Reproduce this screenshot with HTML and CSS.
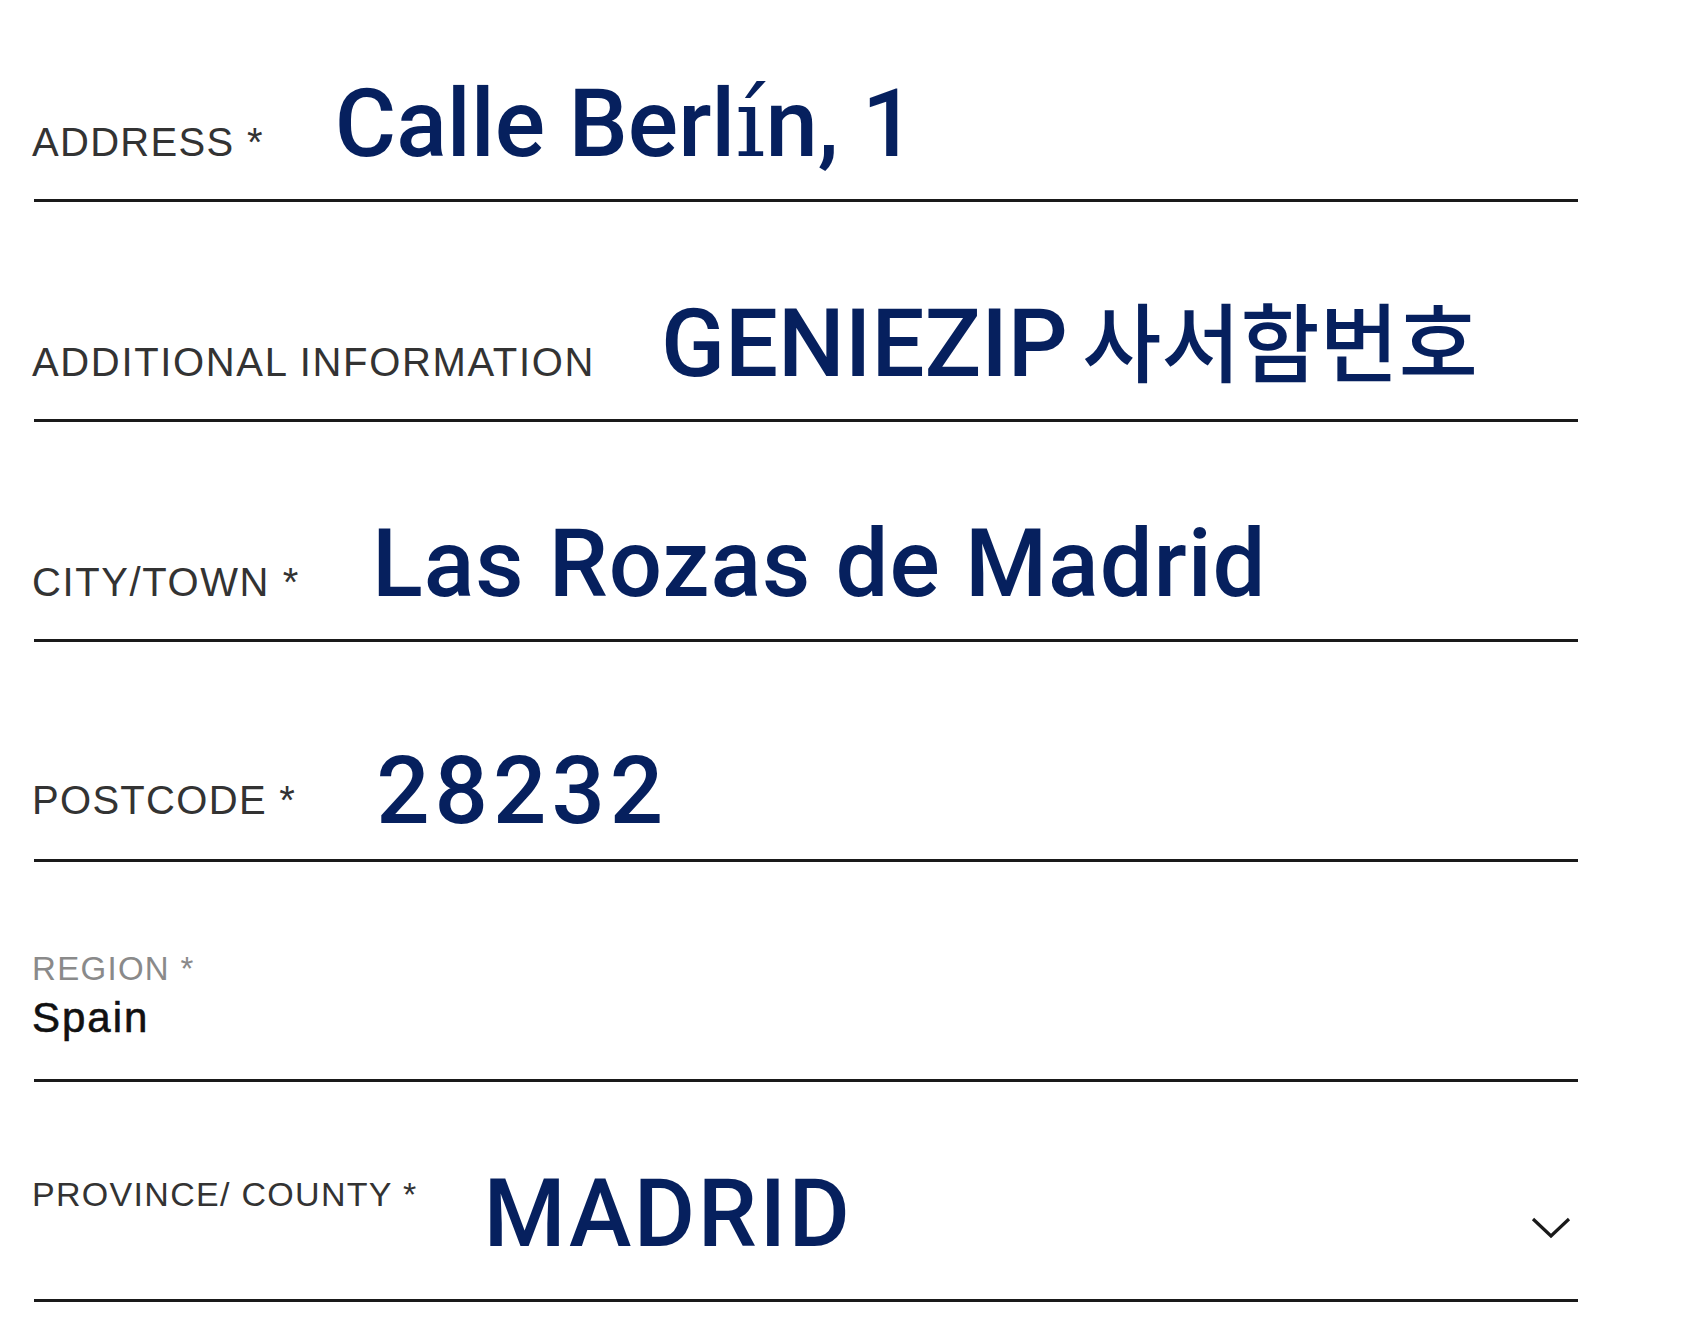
FILE: index.html
```html
<!DOCTYPE html>
<html lang="en">
<head>
<meta charset="utf-8">
<title>Address form</title>
<link rel="stylesheet" href="styles.css">
</head>
<body>
<main class="form">
  <div class="field field--first">
    <div class="field-row">
      <span class="label label--address">ADDRESS *</span>
      <span class="value">Calle Berl<span class="fallback-glyph">í</span>n, 1</span>
    </div>
  </div>
  <div class="field">
    <div class="field-row">
      <span class="label label--info">ADDITIONAL INFORMATION</span>
      <span class="value value--mixed">GENIEZIP <span class="value-ko" lang="ko">사서함번호</span></span>
    </div>
  </div>
  <div class="field">
    <div class="field-row">
      <span class="label label--city">CITY/TOWN *</span>
      <span class="value value--loose">Las Rozas de Madrid</span>
    </div>
  </div>
  <div class="field field--postcode">
    <div class="field-row field-row--bottom">
      <span class="label label--postcode">POSTCODE *</span>
      <span class="value value--digits">28232</span>
    </div>
  </div>
  <div class="field field--stacked">
    <span class="label label--small label--muted">REGION *</span>
    <span class="static-value">Spain</span>
  </div>
  <div class="field field--select">
    <div class="field-row field-row--top">
      <span class="label label--small label--province">PROVINCE/ COUNTY *</span>
      <span class="value value--caps">MADRID</span>
      <svg class="chevron" width="40" height="22" viewBox="0 0 40 22" aria-hidden="true">
        <polyline points="2,2 20,19 38,2" fill="none" stroke="#1a1a1a" stroke-width="3.2"/>
      </svg>
    </div>
  </div>
</main>
</body>
</html>
```

FILE: styles.css
```css
html, body {
  margin: 0;
  padding: 0;
  background: #ffffff;
}

body {
  font-family: "Liberation Sans", Arial, sans-serif;
}

.form {
  width: 1544px;
  margin-left: 34px;
}

.field {
  box-sizing: border-box;
  height: 220px;
  border-bottom: 3px solid #1a1a1a;
  display: flex;
  flex-direction: column;
  justify-content: flex-end;
  padding-bottom: 28px;
}

.field--first {
  height: 202px;
}

.field-row {
  display: flex;
  align-items: baseline;
  margin-left: -2px;
}

.field-row--top {
  align-items: flex-start;
}

.field-row--bottom {
  align-items: flex-end;
}

.label {
  font-size: 40px;
  line-height: 1;
  letter-spacing: 1.3px;
  color: #333333;
  white-space: nowrap;
  margin-right: 70px;
}

.label--address { margin-right: 71px; }
.label--info { letter-spacing: 1.65px; margin-right: 66px; }
.label--city { letter-spacing: 1.6px; margin-right: 72px; }
.label--postcode { margin-right: 80px; margin-bottom: 18px; }

.label--small {
  font-size: 33px;
}

.label--muted {
  color: #8a8a8a;
  margin-left: -2px;
  margin-bottom: 4px;
}

.label--province {
  font-size: 34px;
  margin-top: 10px;
  margin-right: 66px;
}

.value {
  font-family: Roboto, "Liberation Sans", sans-serif;
  font-weight: 500;
  font-size: 94px;
  line-height: 94px;
  color: #06205e;
  white-space: nowrap;
}

.value--mixed {
  word-spacing: -9px;
}

.value--loose {
  letter-spacing: 0.9px;
}

.value--digits {
  letter-spacing: 5px;
}

.value--caps {
  letter-spacing: 2.5px;
}

.fallback-glyph {
  font-family: "DejaVu Serif", "Liberation Serif", serif;
  font-weight: 400;
}

.value-ko {
  font-family: "Noto Sans CJK KR", "Liberation Sans", sans-serif;
  font-size: 86px;
  font-weight: 500;
  word-spacing: normal;
}

.field--postcode {
  padding-bottom: 21px;
}

.field--stacked {
  padding-bottom: 36px;
}

.field--stacked .label {
  line-height: 1.2;
}

.static-value {
  margin-left: -2px;
  font-size: 42px;
  line-height: 1.2;
  letter-spacing: 2px;
  color: #111111;
  -webkit-text-stroke: 0.6px #111111;
}

.field--select {
  padding-bottom: 38px;
}

.chevron {
  margin-left: auto;
  margin-right: 7px;
  margin-top: 50px;
  flex: none;
}
```
